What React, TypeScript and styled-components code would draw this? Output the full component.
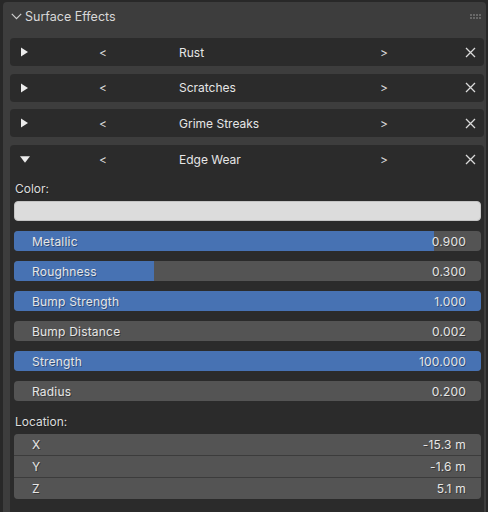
import React from "react";
import styled, { createGlobalStyle } from "styled-components";

const GlobalStyle = createGlobalStyle`
  html, body {
    margin: 0;
    padding: 0;
    background: #282828;
  }
  #root {
    width: 488px;
    height: 512px;
    overflow: hidden;
  }
`;

const Page = styled.div`
  width: 488px;
  height: 512px;
  background: #282828;
  padding: 2px 2px 0 3px;
  box-sizing: border-box;
  font-family: Inter, "DejaVu Sans", sans-serif;
  font-size: 12px;
  color: #e0e0e0;
`;

const Panel = styled.div`
  height: 100%;
  background: #3d3d3d;
  border-radius: 4px 4px 0 0;
  display: flex;
  flex-direction: column;
`;

const PanelHeader = styled.div`
  height: 29px;
  display: flex;
  align-items: center;
  padding: 0 4px 0 8px;
  gap: 3px;
  color: #d8d8d8;
  font-size: 12.5px;
`;

const HeaderTitle = styled.span`
  flex: 1;
`;

const PanelBody = styled.div`
  flex: 1;
  display: flex;
  flex-direction: column;
  gap: 7.7px;
  padding: 7px 2px 0 7px;
`;

const SubPanel = styled.div<{ $open?: boolean }>`
  background: #2b2b2b;
  border-radius: ${(p) => (p.$open ? "4px 4px 0 0" : "4px")};
  flex: ${(p) => (p.$open ? 1 : "none")};
  display: flex;
  flex-direction: column;
`;

const SubHeader = styled.div`
  height: 28px;
  display: grid;
  grid-template-columns: 78px 80px 201px 85px 20px;
  align-items: center;
  padding-left: 11px;
  color: #e2e2e2;
`;

const Arrow = styled.span`
  font-size: 12px;
  color: #d8d8d8;
`;

const SubTitle = styled.span`
  font-size: 12px;
  color: #e6e6e6;
`;

const Content = styled.div`
  display: flex;
  flex-direction: column;
  padding: 0 3px 0 4px;
`;

const SectionLabel = styled.div<{ $top: number }>`
  margin-top: ${(p) => p.$top}px;
  line-height: 16px;
  padding-left: 1px;
  color: #dcdcdc;
  text-shadow: 1px 1px 0 rgba(0, 0, 0, 0.35);
`;

const ColorField = styled.div`
  margin-top: 4px;
  height: 20px;
  box-sizing: border-box;
  border-radius: 4px;
  background: #dcdcdc;
  border: 1px solid #c4c4c4;
`;

const Slider = styled.div`
  position: relative;
  margin-top: 10px;
  height: 20px;
  border-radius: 4px;
  background: #545454;
  overflow: hidden;
`;

const Fill = styled.div`
  position: absolute;
  left: 0;
  top: 0;
  bottom: 0;
  background: #4772b3;
`;

const FieldText = styled.div`
  position: relative;
  height: 100%;
  display: flex;
  align-items: center;
  justify-content: space-between;
  padding: 0 15px 0 18px;
  color: #e6e6e6;
  letter-spacing: 0.2px;
  text-shadow: 1px 1px 0 rgba(0, 0, 0, 0.35);
`;

const VectorGroup = styled.div`
  margin-top: 4px;
  display: flex;
  flex-direction: column;
  gap: 1px;
  background: #3c3c3c;
  border-radius: 4px;
  overflow: hidden;
`;

const VectorRow = styled.div`
  height: 21px;
  background: #545454;
`;

const TriRight = () => (
  <svg width="7" height="10" viewBox="0 0 7 10" style={{ display: "block" }}>
    <path d="M0 0.5 L7 5 L0 9.5 Z" fill="#ececec" />
  </svg>
);

const TriDown = () => (
  <svg width="10" height="7" viewBox="0 0 10 7" style={{ display: "block", marginLeft: -1 }}>
    <path d="M0 0.3 L10 0.3 L5 6.8 Z" fill="#ececec" />
  </svg>
);

const Chevron = () => (
  <svg width="11" height="7" viewBox="0 0 11 7">
    <path d="M0.8 0.8 L5.5 5.6 L10.2 0.8" fill="none" stroke="#cfcfcf" strokeWidth="1.2" />
  </svg>
);

const Close = () => (
  <svg width="11" height="11" viewBox="0 0 11 11" style={{ display: "block" }}>
    <path d="M1 1 L10 10 M10 1 L1 10" stroke="#dadada" strokeWidth="1.3" />
  </svg>
);

const Grip = () => (
  <svg width="12" height="5" viewBox="0 0 12 5">
    {[0, 3, 6, 9].map((x) =>
      [0, 3].map((y) => <rect key={`${x}-${y}`} x={x} y={y} width="2" height="2" fill="#686868" />)
    )}
  </svg>
);

type Sub = { name: string; open?: boolean };

const subs: Sub[] = [
  { name: "Rust" },
  { name: "Scratches" },
  { name: "Grime Streaks" },
  { name: "Edge Wear", open: true },
];

const sliders = [
  { label: "Metallic", value: "0.900", fill: 0.9 },
  { label: "Roughness", value: "0.300", fill: 0.3 },
  { label: "Bump Strength", value: "1.000", fill: 1 },
  { label: "Bump Distance", value: "0.002", fill: 0 },
  { label: "Strength", value: "100.000", fill: 1 },
  { label: "Radius", value: "0.200", fill: 0 },
];

const location = [
  { label: "X", value: "-15.3 m" },
  { label: "Y", value: "-1.6 m" },
  { label: "Z", value: "5.1 m" },
];

const EdgeWear = () => (
  <Content>
    <SectionLabel $top={8}>Color:</SectionLabel>
    <ColorField />
    {sliders.map((s) => (
      <Slider key={s.label}>
        {s.fill > 0 && <Fill style={{ width: `${s.fill * 100}%` }} />}
        <FieldText>
          <span>{s.label}</span>
          <span>{s.value}</span>
        </FieldText>
      </Slider>
    ))}
    <SectionLabel $top={13}>Location:</SectionLabel>
    <VectorGroup>
      {location.map((l) => (
        <VectorRow key={l.label}>
          <FieldText>
            <span>{l.label}</span>
            <span>{l.value}</span>
          </FieldText>
        </VectorRow>
      ))}
    </VectorGroup>
  </Content>
);

export default function App() {
  return (
    <>
      <GlobalStyle />
      <Page>
        <Panel>
          <PanelHeader>
            <Chevron />
            <HeaderTitle>Surface Effects</HeaderTitle>
            <Grip />
          </PanelHeader>
          <PanelBody>
            {subs.map((s) => (
              <SubPanel key={s.name} $open={s.open}>
                <SubHeader>
                  <span>{s.open ? <TriDown /> : <TriRight />}</span>
                  <Arrow>&lt;</Arrow>
                  <SubTitle>{s.name}</SubTitle>
                  <Arrow>&gt;</Arrow>
                  <Close />
                </SubHeader>
                {s.open && <EdgeWear />}
              </SubPanel>
            ))}
          </PanelBody>
        </Panel>
      </Page>
    </>
  );
}
